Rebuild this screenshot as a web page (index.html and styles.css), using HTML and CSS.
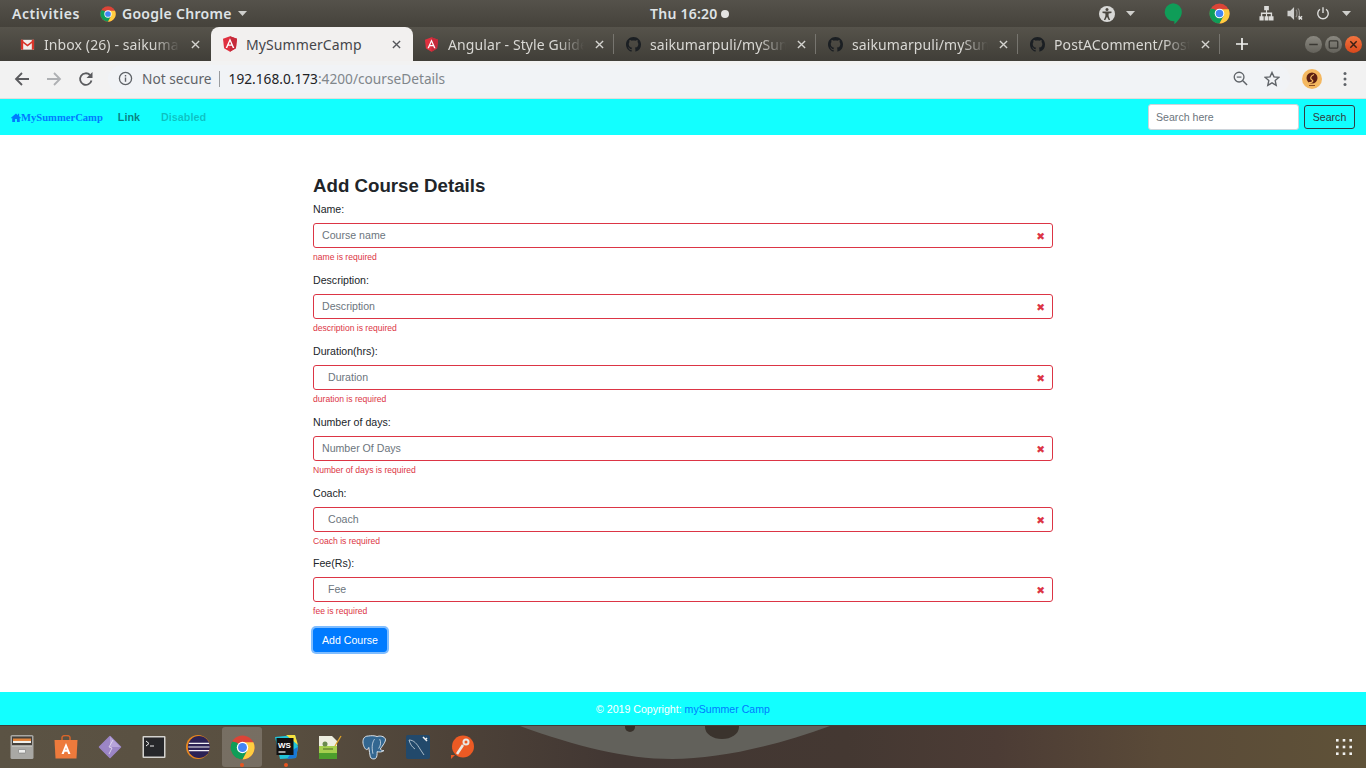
FILE: index.html
```html
<!DOCTYPE html>
<html lang="en">
<head>
<meta charset="utf-8">
<title>MySummerCamp</title>
<link rel="stylesheet" href="styles.css">
</head>
<body>
<svg class="defs" width="0" height="0" aria-hidden="true">
  <symbol id="i-chrome" viewBox="0 0 48 48">
    <circle cx="24" cy="24" r="23" fill="#db4437"/>
    <path d="M24 47 35.500 27 24 24 12.500 27 4.100 35.500A23 23 0 0 0 24 47Z" fill="#0f9d58"/>
    <path d="M24 24 12.500 14.500 4.100 12.500A23 23 0 0 0 4.100 35.500L14 30Z" fill="#0f9d58"/>
    <path d="M24 14H44.900A23 23 0 0 1 24 47L33 30Z" fill="#ffcd40"/>
    <circle cx="24" cy="24" r="11" fill="#fff"/>
    <circle cx="24" cy="24" r="8.600" fill="#4285f4"/>
  </symbol>
  <symbol id="i-angular" viewBox="0 0 48 48">
    <path d="M24 1 3 8.500l3.200 28L24 47l17.800-10.500 3.200-28Z" fill="#e0303f"/>
    <path d="M24 1v46l17.800-10.500 3.200-28Z" fill="#c62a3a"/>
    <path d="M24 7 11 36h4.800l2.600-6.500h11.200l2.600 6.500H37ZM20.200 25.300 24 16.200l3.800 9.100Z" fill="#fff"/>
  </symbol>
  <symbol id="i-github" viewBox="0 0 16 16">
    <path fill="#1b1f23" d="M8 0C3.580 0 0 3.580 0 8c0 3.540 2.290 6.530 5.470 7.590.4.070.55-.17.55-.38 0-.19-.01-.82-.01-1.490-2.010.37-2.530-.49-2.690-.94-.09-.23-.48-.94-.82-1.130-.28-.15-.68-.52-.01-.53.63-.01 1.080.58 1.230.82.72 1.210 1.870.87 2.330.66.07-.52.28-.87.51-1.070-1.780-.2-3.640-.89-3.640-3.950 0-.87.31-1.590.82-2.150-.08-.2-.36-1.020.08-2.120 0 0 .67-.21 2.200.82.64-.18 1.320-.27 2-.27s1.360.09 2 .27c1.530-1.040 2.200-.82 2.200-.82.44 1.100.16 1.920.08 2.120.51.56.82 1.270.82 2.150 0 3.070-1.870 3.750-3.650 3.950.29.25.54.73.54 1.480 0 1.070-.01 1.930-.01 2.200 0 .21.15.46.55.38A8.010 8.010 0 0 0 16 8c0-4.420-3.580-8-8-8Z"/>
  </symbol>
  <symbol id="i-gmail" viewBox="0 0 16 16">
    <path d="M1 3h14v10.500H1Z" fill="#f1efec"/>
    <path d="M1 2.600 8 8l7-5.400v2.200L8 10.200 1 4.800Z" fill="#d8352a"/>
    <path d="M1 3h2.400v10.500H1.900A.9.9 0 0 1 1 12.600ZM15 3h-2.400v10.500h1.500a.9.9 0 0 0 .9-.9Z" fill="#d8352a"/>
  </symbol>
  <symbol id="i-close" viewBox="0 0 10 10">
    <path d="M1 1 9 9M9 1 1 9" fill="none" stroke="currentColor" stroke-width="1.500"/>
  </symbol>
  <symbol id="i-caret" viewBox="0 0 10 6">
    <path d="M0 0h10L5 5.500Z" fill="currentColor"/>
  </symbol>
</svg>

<div class="app">
  <header class="topbar">
    <div class="topbar-left">
      <span class="activities">Activities</span>
      <span class="appmenu">
        <svg class="ic16" viewBox="0 0 48 48"><use href="#i-chrome"/></svg>
        <span>Google Chrome</span>
        <svg class="caret" viewBox="0 0 10 6"><use href="#i-caret"/></svg>
      </span>
    </div>
    <div class="clock"><span>Thu 16:20</span><i class="clock-dot"></i></div>
    <div class="tray">
      <svg class="tray-a11y" viewBox="0 0 16 16"><circle cx="8" cy="8" r="8" fill="#d8d8d6"/><circle cx="8" cy="3.600" r="1.500" fill="#4a4740"/><path d="M3.500 5.600h9v1.300L9.600 7.500V10l1.500 4H9.700L8 10.700 6.300 14H4.900l1.500-4V7.500L3.500 6.900Z" fill="#4a4740"/></svg>
      <svg class="caret tray-caret1" viewBox="0 0 10 6"><use href="#i-caret"/></svg>
      <svg class="tray-hangouts" viewBox="0 0 20 24"><path d="M10 0a9.800 9.800 0 0 1 9.800 9.800c0 6-5 10.500-8.300 13.700V20A10 10 0 0 1 10 0Z" fill="#0f9d58"/></svg>
      <svg class="tray-chrome" viewBox="0 0 48 48"><use href="#i-chrome"/></svg>
      <svg class="tray-net" viewBox="0 0 16 16"><path d="M5.500 0h5v4.500H8.600V7H14v4h1.500v4.500h-5V11h2V8.500H8.600V11h1.400v4.500H6V11h1.400V8.500H3.500V11H5v4.500H.5V11H2V7h5.400V4.500H5.500Z" fill="#dcdcda"/></svg>
      <svg class="tray-vol" viewBox="0 0 16 16"><path d="M0 5h3l4-4v14l-4-4H0Z" fill="#cfcfcd"/><path d="M9 4c1.500 1 1.500 6 0 8M11 2.500c2.400 2 2.400 9 0 11" fill="none" stroke="#8f8d88" stroke-width="1.300"/><path d="m12 11 3.500 3.500m0-3.500L12 14.500" stroke="#e4e4e2" stroke-width="1.500"/></svg>
      <svg class="tray-power" viewBox="0 0 16 16"><path d="M4.500 3.200a6 6 0 1 0 7 0" fill="none" stroke="#dcdcda" stroke-width="1.600"/><path d="M8 .8v6.500" stroke="#dcdcda" stroke-width="1.600"/></svg>
      <svg class="caret" viewBox="0 0 10 6"><use href="#i-caret"/></svg>
    </div>
  </header>

  <nav class="tabstrip">
    <div class="tab">
      <svg class="fav" viewBox="0 0 16 16"><use href="#i-gmail"/></svg>
      <span class="tab-title">Inbox (26) - saikumarpuli</span>
      <svg class="tab-close" viewBox="0 0 10 10"><use href="#i-close"/></svg>
    </div>
    <div class="tab tab-active">
      <svg class="fav" viewBox="0 0 48 48"><use href="#i-angular"/></svg>
      <span class="tab-title">MySummerCamp</span>
      <svg class="tab-close" viewBox="0 0 10 10"><use href="#i-close"/></svg>
    </div>
    <div class="tab tab-sep">
      <svg class="fav" viewBox="0 0 48 48"><use href="#i-angular"/></svg>
      <span class="tab-title">Angular - Style Guide</span>
      <svg class="tab-close" viewBox="0 0 10 10"><use href="#i-close"/></svg>
    </div>
    <div class="tab tab-sep">
      <svg class="fav" viewBox="0 0 16 16"><use href="#i-github"/></svg>
      <span class="tab-title">saikumarpuli/mySummerCamp</span>
      <svg class="tab-close" viewBox="0 0 10 10"><use href="#i-close"/></svg>
    </div>
    <div class="tab tab-sep">
      <svg class="fav" viewBox="0 0 16 16"><use href="#i-github"/></svg>
      <span class="tab-title">saikumarpuli/mySummerCamp</span>
      <svg class="tab-close" viewBox="0 0 10 10"><use href="#i-close"/></svg>
    </div>
    <div class="tab tab-sep">
      <svg class="fav" viewBox="0 0 16 16"><use href="#i-github"/></svg>
      <span class="tab-title">PostAComment/PostAComment</span>
      <svg class="tab-close" viewBox="0 0 10 10"><use href="#i-close"/></svg>
    </div>
    <svg class="newtab" viewBox="0 0 12 12"><path d="M6 0v12M0 6h12" stroke="#f2f2f0" stroke-width="1.700"/></svg>
    <div class="winctl">
      <span class="winbtn"><svg viewBox="0 0 16 16"><path d="M4 8h8" stroke="#3a3833" stroke-width="1.400"/></svg></span>
      <span class="winbtn"><svg viewBox="0 0 16 16"><rect x="4" y="4.500" width="8" height="7" rx="1" fill="none" stroke="#3a3833" stroke-width="1.200"/></svg></span>
      <span class="winbtn winbtn-close"><svg viewBox="0 0 16 16"><path d="m5 5 6 6m0-6-6 6" stroke="#3a2015" stroke-width="1.400"/></svg></span>
    </div>
  </nav>

  <div class="toolbar">
    <svg class="tb-ic" viewBox="0 0 16 16"><path d="M15 8H2M8 2 2 8l6 6" fill="none" stroke="#5a5b5e" stroke-width="1.800"/></svg>
    <svg class="tb-ic tb-fwd" viewBox="0 0 16 16"><path d="M1 8h13M8 2l6 6-6 6" fill="none" stroke="#aeb0b3" stroke-width="1.800"/></svg>
    <svg class="tb-ic tb-reload" viewBox="0 0 16 16"><path d="M13.500 9.500A5.800 5.800 0 1 1 12 4" fill="none" stroke="#5a5b5e" stroke-width="1.800"/><path d="M14.500 1v6h-6Z" fill="#5a5b5e"/></svg>
    <div class="omnibox">
      <svg class="info" viewBox="0 0 16 16"><circle cx="8" cy="8" r="6.500" fill="none" stroke="#5f6368" stroke-width="1.400"/><path d="M8 7v4.500M8 4.300v1.500" stroke="#5f6368" stroke-width="1.500"/></svg>
      <span class="secure">Not secure</span>
      <span class="url"><b>192.168.0.173</b>:4200/courseDetails</span>
      <svg class="omni-zoom" viewBox="0 0 16 16"><circle cx="6.500" cy="6.500" r="5.200" fill="none" stroke="#5f6368" stroke-width="1.400"/><path d="m10.500 10.500 4.500 4.500" stroke="#5f6368" stroke-width="1.600"/><path d="M4 6.500h5" stroke="#5f6368" stroke-width="1.300"/></svg>
      <svg class="omni-star" viewBox="0 0 16 16"><path d="m8 1.500 2 4.400 4.800.5-3.600 3.200 1 4.700L8 11.900l-4.200 2.400 1-4.700L1.200 6.400 6 5.900Z" fill="none" stroke="#5f6368" stroke-width="1.400"/></svg>
    </div>
    <svg class="avatar" viewBox="0 0 20 20"><circle cx="10" cy="10" r="10" fill="#f4b860"/><circle cx="10" cy="9" r="5.500" fill="#5c1f12"/><path d="M12 5.500C8 7 8 10 10 11s0 3-3 2.500" fill="none" stroke="#f4b860" stroke-width="1.200"/><path d="M7 16.500h6" stroke="#8a4b20" stroke-width="1"/></svg>
    <svg class="kebab" viewBox="0 0 4 16"><circle cx="2" cy="2.500" r="1.500" fill="#5f6368"/><circle cx="2" cy="8" r="1.500" fill="#5f6368"/><circle cx="2" cy="13.500" r="1.500" fill="#5f6368"/></svg>
  </div>

  <div class="navbar">
    <a class="brand"><svg class="home" viewBox="0 0 16 14"><path d="M8 .5 0 7.500l.8 1L2 7.500V14h4.500V9.500h3V14H14V7.500l1.200 1 .8-1-3-2.600V1h-2v2.200Z" fill="#007bff"/></svg>MySummerCamp</a>
    <a class="nav-link">Link</a>
    <a class="nav-link nav-disabled">Disabled</a>
    <div class="nav-search">
      <input class="search-input" type="text" placeholder="Search here">
      <button class="search-btn" type="button">Search</button>
    </div>
  </div>

  <main class="main">
    <form class="course-form">
      <h2 class="form-title">Add Course Details</h2>
      <div class="group">
        <label class="lbl">Name:</label>
        <div class="field"><input class="ctl" type="text" placeholder="Course name"><span class="bad">✖</span></div>
        <div class="err">name is required</div>
      </div>
      <div class="group">
        <label class="lbl">Description:</label>
        <div class="field"><input class="ctl" type="text" placeholder="Description"><span class="bad">✖</span></div>
        <div class="err">description is required</div>
      </div>
      <div class="group">
        <label class="lbl">Duration(hrs):</label>
        <div class="field"><input class="ctl ctl-num" type="text" placeholder="Duration"><span class="bad">✖</span></div>
        <div class="err">duration is required</div>
      </div>
      <div class="group">
        <label class="lbl">Number of days:</label>
        <div class="field"><input class="ctl" type="text" placeholder="Number Of Days"><span class="bad">✖</span></div>
        <div class="err">Number of days is required</div>
      </div>
      <div class="group">
        <label class="lbl">Coach:</label>
        <div class="field"><input class="ctl ctl-num" type="text" placeholder="Coach"><span class="bad">✖</span></div>
        <div class="err">Coach is required</div>
      </div>
      <div class="group">
        <label class="lbl">Fee(Rs):</label>
        <div class="field"><input class="ctl ctl-num" type="text" placeholder="Fee"><span class="bad">✖</span></div>
        <div class="err">fee is required</div>
      </div>
      <button class="submit" type="button">Add Course</button>
    </form>
  </main>

  <footer class="footer">© 2019 Copyright: <a class="foot-link">mySummer Camp</a></footer>

  <div class="dock">
    <svg class="wall" viewBox="0 0 1366 43" preserveAspectRatio="none" aria-hidden="true">
      <path d="M520 0C575 20 625 33 672 33S775 20 830 0Z" fill="#62615b"/>
      <ellipse cx="630" cy="1" rx="5" ry="5" fill="#37302a"/>
      <ellipse cx="722" cy="1" rx="17" ry="12" fill="#3a332d"/>
    </svg>
    <span class="dock-item"><svg viewBox="0 0 24 24"><rect x="0.500" y="0" width="23" height="24" rx="1.500" fill="#a9a8a4"/><rect x="2" y="1.500" width="20" height="9" fill="#45413c"/><rect x="3" y="3.500" width="18" height="2.500" fill="#e0843c"/><rect x="3" y="6" width="18" height="2" fill="#f0efea"/><rect x="2" y="10.500" width="20" height="1" fill="#d6d5d0"/><rect x="8.500" y="14.500" width="7" height="3.500" rx=".5" fill="#eeeeec" stroke="#666" stroke-width=".5"/></svg></span>
    <span class="dock-item"><svg viewBox="0 0 24 24"><path d="M.5 5h23l-1 18.500H1.500Z" fill="#ed7a3c"/><path d="M8 5V2.500a4 2 0 0 1 8 0V5" fill="none" stroke="#d9652a" stroke-width="1.500"/><path d="M12 8 7.500 19h2.300l.8-2.200h2.800l.8 2.200h2.300ZM11.300 14.800l.7-2.200.7 2.200Z" fill="#fff"/></svg></span>
    <span class="dock-item"><svg viewBox="0 0 24 24"><path d="M12 1.500 22.500 12 12 22.500 1.500 12Z" fill="#9c86c6" stroke="#9c86c6" stroke-width="1.500" stroke-linejoin="round"/><path d="M12 1.500 22.500 12H12Z" fill="#b7a4da"/><path d="M15 5 11 12l3 1-3 6" fill="none" stroke="#e7e0f3" stroke-width=".8"/></svg></span>
    <span class="dock-item"><svg viewBox="0 0 24 24"><rect x="0.500" y="1" width="23" height="22" rx="1" fill="#d4d3cf"/><rect x="2" y="2.500" width="20" height="19" fill="#26272a"/><path d="m4 6 3 2.500L4 11" fill="none" stroke="#eee" stroke-width="1"/><path d="M8 11h4" stroke="#eee" stroke-width="1"/></svg></span>
    <span class="dock-item"><svg viewBox="0 0 26 26"><circle cx="13" cy="13" r="13" fill="#e8861e"/><circle cx="14" cy="13" r="12" fill="#2c2255"/><path d="M3 9h22M2.500 13h23M3 17h22" stroke="#f2f0f5" stroke-width="1.300"/></svg></span>
    <span class="dock-item dock-active"><svg viewBox="0 0 48 48"><use href="#i-chrome"/></svg><i class="dock-dot"></i></span>
    <span class="dock-item"><svg viewBox="0 0 24 24"><path d="M1 2 21 0l3 12-2 11-16 1Z" fill="#21c4d8"/><path d="M12 0h9l3 10Z" fill="#f6e13f"/><path d="M20 14 24 12l-2 11-9 1Z" fill="#1878d8"/><rect x="2.500" y="3" width="17" height="17" fill="#111"/><text class="ws-text" x="4" y="12.500">WS</text><path d="M4.500 17h7" stroke="#fff" stroke-width="1.200"/></svg><i class="dock-dot"></i></span>
    <span class="dock-item"><svg viewBox="0 0 24 24"><path d="M1 1h13l5 5v18H1Z" fill="#eeeee0"/><path d="M1 11h18v7H1Z" fill="#a6d04e"/><path d="M1 18h18v6H1Z" fill="#4d9e2c"/><circle cx="7" cy="9" r="2.500" fill="#6a8a4f"/><path d="M5 14h10" stroke="#5c7a2c" stroke-width="1.200"/><path d="m17 11 6-10" stroke="#e0a428" stroke-width="1.300"/></svg></span>
    <span class="dock-item"><svg class="ic-pg" viewBox="0 0 24 24"><path d="M6 1C2 1 .5 4 1 8c.5 3 2 6 3.500 6 1 0 1.500-1 2-2 .5 3 1 7 1.500 9 .5 2 3.500 2.500 5 1.500 1.500-1 1.500-4 1.500-6.500 2 .5 5 .5 6.500-1-1.500 0-3-.5-3.500-1.500C20 10 23 6 22.500 4 21.500 1 17 .5 14.500 1.500 12 .5 9 .5 6 1Z" fill="#336791" stroke="#e6edf3" stroke-width=".9"/><path d="M12 4c-2 3-3 7-1.500 14M17 4c1.500 3 1 6-1 9" fill="none" stroke="#e6edf3" stroke-width=".7"/></svg></span>
    <span class="dock-item"><svg viewBox="0 0 24 24"><rect x="0" y="0" width="24" height="24" rx="2" fill="#22496b"/><path d="M3 5c5 0 8 4 11 9l4 6M3 5c1 4 3 7 6 9" fill="none" stroke="#cbd7e0" stroke-width=".8"/><path d="m17 2 4 4M19 5l2-2" stroke="#f2f2f2" stroke-width="1.500"/></svg></span>
    <span class="dock-item"><svg viewBox="0 0 24 24"><circle cx="13" cy="11.500" r="11" fill="#ec5a24"/><path d="M1 20h4l-4 4Z" fill="#ec5a24"/><path d="m7 19 6-9" stroke="#e8e8e4" stroke-width="2.500"/><circle cx="16" cy="7" r="3.500" fill="#e8e8e4"/><circle cx="16" cy="7" r="1.500" fill="#ec5a24"/></svg></span>
    <span class="dock-spacer"></span>
    <svg class="dock-grid" viewBox="0 0 16 16"><g fill="#f2f2f0"><rect x="0" y="0" width="2.600" height="2.600"/><rect x="6.700" y="0" width="2.600" height="2.600"/><rect x="13.400" y="0" width="2.600" height="2.600"/><rect x="0" y="6.700" width="2.600" height="2.600"/><rect x="6.700" y="6.700" width="2.600" height="2.600"/><rect x="13.400" y="6.700" width="2.600" height="2.600"/><rect x="0" y="13.400" width="2.600" height="2.600"/><rect x="6.700" y="13.400" width="2.600" height="2.600"/><rect x="13.400" y="13.400" width="2.600" height="2.600"/></g></svg>
  </div>
</div>
</body>
</html>
```

FILE: styles.css
```css
* { box-sizing: border-box; }
html, body { margin: 0; height: 100%; overflow: hidden; background: #fff; }
body { font-family: "Liberation Sans", Arial, sans-serif; color: #212529; }
.defs { position: absolute; }
.app { display: flex; flex-direction: column; width: 1366px; height: 768px; }
svg { display: block; flex: none; }

/* GNOME top bar */
.topbar {
  height: 27px; flex: none; display: flex; align-items: center; justify-content: space-between;
  position: relative; padding: 0 15px 0 12px; color: #dfe3e6;
  background: linear-gradient(#55524b, #45423b);
  font: 500 14px "Noto Sans", sans-serif; letter-spacing: .25px;
}
.topbar-left { display: flex; align-items: center; gap: 20px; }
.activities { font-weight: 600; letter-spacing: .55px; }
.appmenu { display: flex; align-items: center; gap: 6px; font-weight: 600; letter-spacing: .3px; }
.ic16 { width: 16px; height: 16px; }
.caret { width: 9px; height: 5.500px; color: #cfcfcc; }
.clock { position: absolute; left: 650px; top: 0; height: 27px; display: flex; align-items: center; gap: 3px; font-weight: 600; }
.clock-dot { width: 8px; height: 8px; border-radius: 50%; background: #e4e4e2; }
.tray { display: flex; align-items: center; }
.tray-a11y { width: 16px; height: 16px; margin-right: 11px; }
.tray-caret1 { margin-right: 29px; }
.tray-hangouts { width: 18px; height: 22px; margin-right: 27px; }
.tray-chrome { width: 21px; height: 21px; margin-right: 29px; }
.tray-net { width: 15px; height: 15px; margin-right: 13px; }
.tray-vol { width: 16px; height: 15px; margin-right: 13px; }
.tray-power { width: 14px; height: 15px; margin-right: 12px; }

/* Chrome tabs */
.tabstrip {
  height: 34px; flex: none; display: flex; align-items: stretch; padding-left: 8px;
  background: linear-gradient(#56534b, #403e38);
  font: 14px "Noto Sans", sans-serif; color: #d9d8d4; position: relative;
}
.tab { width: 202px; flex: none; display: flex; align-items: center; padding: 0 10px 0 12px; position: relative; }
.tab-active { background: #f2f0ef; border-radius: 8px 8px 0 0; color: #45464a; margin-left: 1px; margin-right: -1px; padding-left: 11px; }
.tab-sep::after { content: ""; position: absolute; right: 0; top: 7px; height: 20px; width: 1px; background: #77756f; }
.fav { width: 15px; height: 15px; margin-right: 9px; }
.tab-active .fav { width: 16px; height: 16px; margin-right: 8px; }
.tab-title {
  flex: 1; min-width: 0; white-space: nowrap; overflow: hidden; margin-right: 11px; letter-spacing: .1px;
  -webkit-mask-image: linear-gradient(90deg, #000 80%, transparent);
  mask-image: linear-gradient(90deg, #000 80%, transparent);
}
.tab-active .tab-title { -webkit-mask-image: none; mask-image: none; }
.tab-close { width: 9px; height: 9px; color: #d4d3cf; }
.tab-active .tab-close { color: #55565a; margin-right: 2px; }
.newtab { width: 12px; height: 12px; margin: 11px 0 0 16px; }
.winctl { margin-left: auto; display: flex; align-items: center; gap: 3px; padding-right: 4px; }
.winbtn { width: 17px; height: 17px; border-radius: 50%; background: linear-gradient(#8a8880, #64625b); }
.winbtn-close { background: linear-gradient(#f2743f, #d9481c); }

/* Chrome toolbar */
.toolbar {
  height: 38px; flex: none; display: flex; align-items: center; padding: 0 0 2px 14px;
  background: #f2f2f2; border-bottom: 1px solid #e2dedb;
}
.tb-ic { width: 16px; height: 16px; }
.tb-fwd { margin-left: 16px; }
.tb-reload { margin-left: 16px; }
.omnibox {
  width: 1182px; height: 28px; margin-left: 14px; display: flex; align-items: center;
  background: #f1f3f6; border-radius: 14px; padding: 0 10px;
  font: 13.700px "Noto Sans", sans-serif; color: #5f6368;
}
.info { width: 15px; height: 15px; margin-right: 9px; }
.secure { padding-right: 7px; border-right: 1px solid #9a9c9f; line-height: 16px; }
.url { margin-left: 9px; color: #80868b; }
.url b { font-weight: 400; color: #202124; }
.omni-zoom { width: 15px; height: 15px; margin-left: auto; }
.omni-star { width: 16px; height: 16px; margin-left: 16.500px; }
.avatar { width: 20px; height: 20px; margin-left: 12px; }
.kebab { width: 4px; height: 16px; margin-left: 21px; }

/* Page navbar */
.navbar {
  height: 36px; flex: none; display: flex; align-items: center; padding: 0 11px;
  background: #12ffff; font-size: 10.600px;
}
.brand { display: flex; align-items: center; font: bold 10.600px "Liberation Serif", serif; color: #007bff; margin-right: 15px; }
.home { width: 10px; height: 9px; }
.nav-link { color: rgba(0, 0, 0, .5); margin-right: 21px; font-size: 10.800px; font-weight: 700; }
.nav-disabled { color: rgba(0, 0, 0, .25); }
.nav-search { margin-left: auto; display: flex; align-items: center; gap: 5px; }
.search-input {
  width: 151px; height: 26px; padding: 0 7px; border: 1px solid #ced4da; border-radius: 3px;
  font: 10.600px "Liberation Sans", sans-serif; background: #fff; outline: none;
}
.search-input::placeholder { color: #6c757d; opacity: 1; }
.search-btn {
  width: 51px; height: 24px; padding: 0; border: 1px solid #343a40; border-radius: 3px; background: transparent;
  font: 10.600px "Liberation Sans", sans-serif; color: #343a40;
}

/* Course form */
.main { flex: 1; min-height: 0; padding: 40px 0 0 313px; background: #fff; }
.course-form { width: 740px; }
.form-title { margin: 0 0 4.450px; height: 22px; font-size: 18.700px; line-height: 22px; font-weight: 700; color: #212529; }
.group { margin-bottom: 7.920px; }
.lbl { display: block; height: 16px; margin-bottom: 5.900px; font-size: 10.600px; line-height: 16px; color: #212529; }
.field { position: relative; }
.ctl {
  display: block; width: 100%; height: 25px; padding: 0 8px .7px; border: 1px solid #dc3545; border-radius: 3px;
  font: 10.600px "Liberation Sans", sans-serif; color: #495057; background: #fff; outline: none;
}
.ctl-num { padding-left: 14px; }
.ctl::placeholder { color: #6c757d; opacity: 1; }
.bad { position: absolute; right: 8px; top: 7px; font: 10.500px/13px "DejaVu Sans", sans-serif; color: #dc3545; }
.err { height: 13px; margin-top: 3px; font-size: 8.570px; line-height: 13px; color: #dc3545; }
.submit {
  display: block; width: 74px; height: 24px; margin-top: 10px; padding: 0; border: 1px solid #007bff; border-radius: 3px;
  background: #007bff; color: #fff; font: 10.600px "Liberation Sans", sans-serif;
  box-shadow: 0 0 0 2px rgba(0, 123, 255, .5);
}

/* Footer */
.footer {
  height: 33px; flex: none; text-align: center; line-height: 34px;
  background: #12ffff; color: #fff; font-size: 10.600px;
}
.foot-link { color: #007bff; }

/* Ubuntu dock */
.dock {
  height: 43px; flex: none; display: flex; align-items: center; position: relative; overflow: hidden;
  border-top: 1px solid #3f3d38;
  background: linear-gradient(90deg, #5b5344 0, #594f40 20%, #4d4238 33%, #423733 45%, #443832 62%, #4c3c35 73%, #5a4a38 85%, #5f5238 100%);
}
.wall { position: absolute; left: 0; top: 0; width: 1366px; height: 43px; }
.dock-item {
  width: 40px; height: 40px; margin: 0 2px; flex: none; position: relative;
  display: flex; align-items: center; justify-content: center; border-radius: 3px;
}
.dock-item svg { width: 24px; height: 24px; }
.dock-active { background: rgba(255, 255, 255, .18); }
.dock-active svg { width: 25px; height: 25px; }
.dock-item .ic-pg { width: 25px; height: 25px; }
.dock-dot { position: absolute; left: 18px; bottom: 0; width: 4px; height: 4px; border-radius: 50%; background: #e95420; }
.ws-text { font: bold 8px "Liberation Sans", sans-serif; fill: #fff; }
.dock-spacer { flex: 1; }
.dock-grid { width: 16px; height: 16px; margin-right: 14px; position: relative; }
```
